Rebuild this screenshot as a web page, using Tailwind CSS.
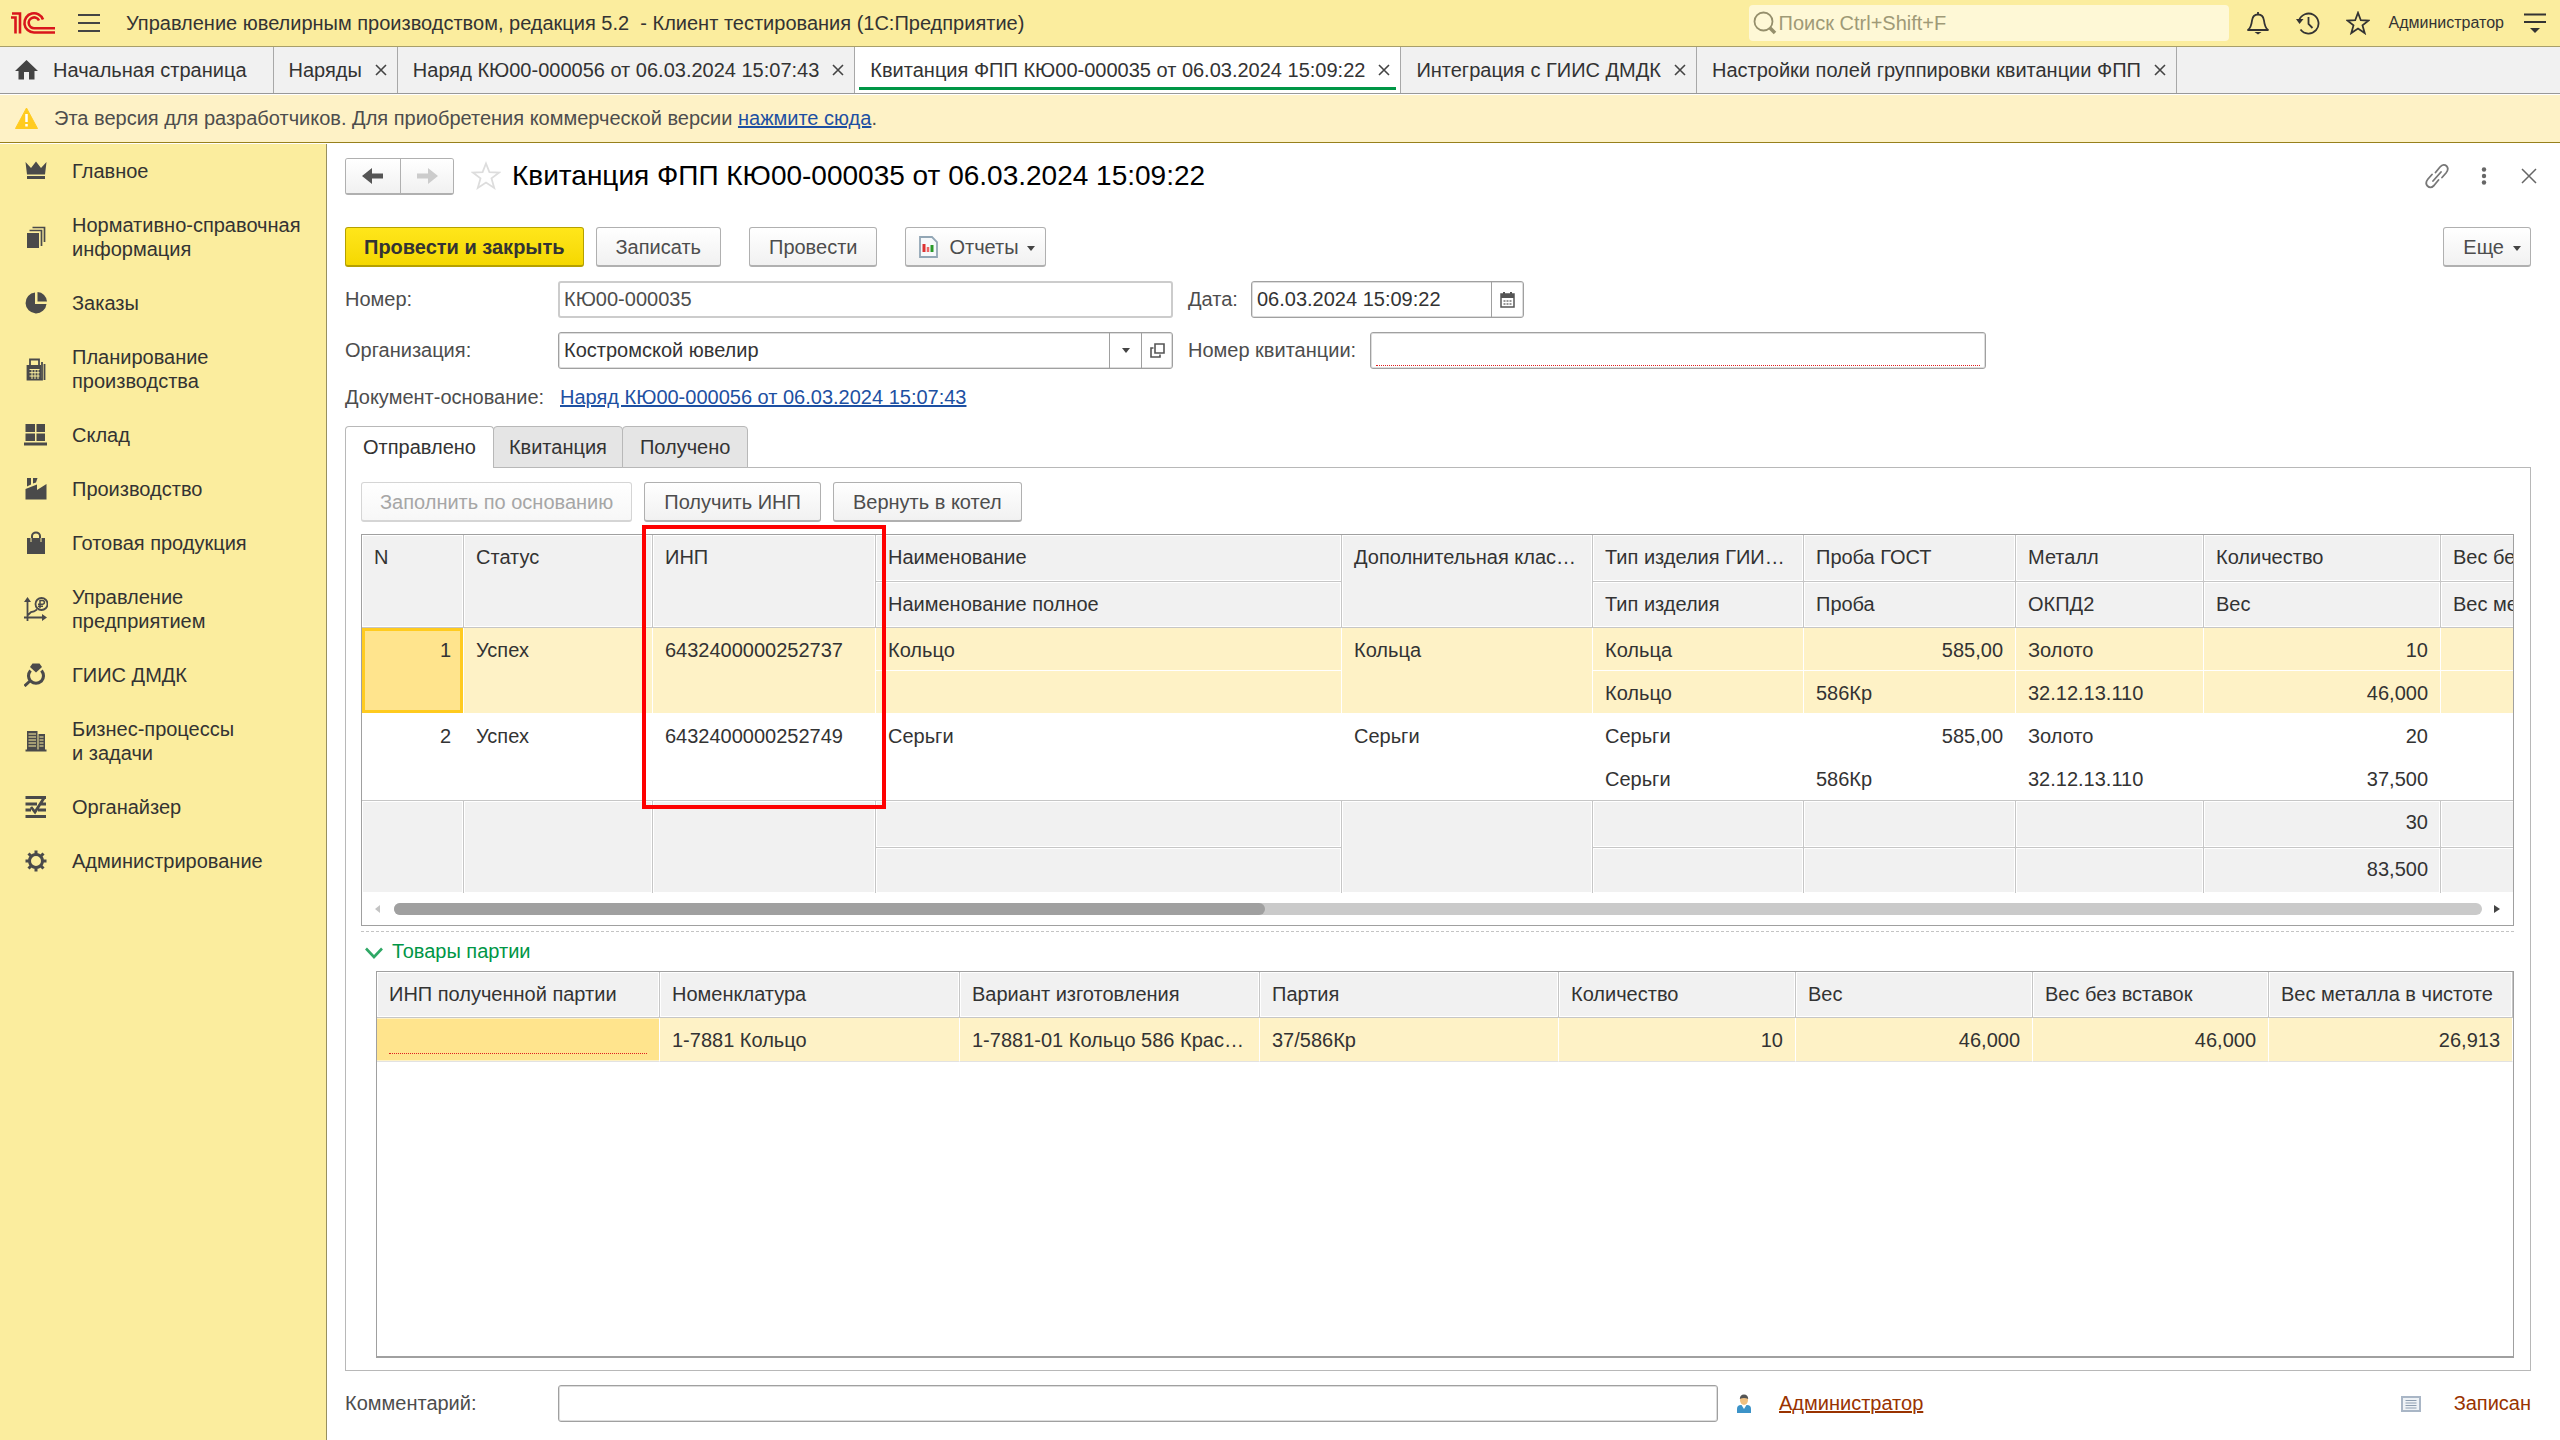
<!DOCTYPE html>
<html lang="ru">
<head>
<meta charset="utf-8">
<title>Квитанция ФПП КЮ00-000035 от 06.03.2024 15:09:22</title>
<script src="https://cdn.jsdelivr.net/npm/@tailwindcss/browser@4"></script>
</head>
<body class="flex min-h-screen flex-col bg-white font-['Liberation_Sans',Arial,sans-serif] text-[20px] leading-6 text-[#333]">

<!-- Application header -->
<header class="flex h-[47px] shrink-0 items-center border-b border-[#a89f6a] bg-[#fbed9e] pl-[11px] pr-[13px]">
  <svg class="h-[24px] w-[45px] shrink-0" viewBox="0 0 45 24" fill="none" stroke="#d9161c" stroke-width="2.6" aria-label="1С" role="img">
    <path d="M0 6.5H4.5V22.500M1 2.500H9V22.500"/>
    <path d="M32 8.500A9.600 9.600 0 1 0 23 21.500H44"/>
    <path d="M28 9.500A5.400 5.400 0 1 0 23.500 17.200H44"/>
  </svg>
  <button class="ml-[22px] shrink-0" aria-label="Меню"><svg class="h-[18px] w-[23px]" viewBox="0 0 23 18" stroke="#444" stroke-width="2"><path d="M0 1H22M0 9H22M0 17H22"/></svg></button>
  <h1 class="ml-[25px] whitespace-pre pb-px">Управление ювелирным производством, редакция 5.2  - Клиент тестирования (1С:Предприятие)</h1>
  <label class="ml-auto flex h-9 w-[480px] items-center rounded-sm bg-[#fef8d6] pl-1">
    <svg class="h-6 w-[25px] shrink-0" viewBox="0 0 25 24" fill="none" stroke="#958f6c" stroke-width="1.8"><circle cx="10.500" cy="10.500" r="9"/><path d="M17 17l5 5" stroke-width="3.500"/></svg>
    <input type="search" aria-label="Поиск" placeholder="Поиск Ctrl+Shift+F" class="w-full bg-transparent pl-px outline-none placeholder:text-[#9f9a77]">
  </label>
  <div class="ml-[17px] flex items-center gap-[26px]">
    <button aria-label="Уведомления"><svg class="h-6 w-6" viewBox="0 0 24 24" fill="none" stroke="#333" stroke-width="1.800" stroke-linejoin="round"><path d="M2 19C5 16.500 5.500 14 6 9.500C6.500 5.500 8.500 3.500 12 3.500S17.500 5.500 18 9.500C18.500 14 19 16.500 22 19Z"/><path d="M12 1v2"/><path d="M8.500 21h7l-3.500 2.500Z" fill="#333" stroke="none"/></svg></button>
    <button aria-label="История"><svg class="h-6 w-6" viewBox="0 0 24 24" fill="none" stroke="#333" stroke-width="1.800"><path d="M3 9.500A10 10 0 1 1 4.500 18.500"/><path d="M0 8h7.500l-4 5Z" fill="#333" stroke="none"/><path d="M12.500 6v7l4 4"/></svg></button>
    <button aria-label="Избранное"><svg class="h-6 w-6" viewBox="0 0 24 24" fill="none" stroke="#333" stroke-width="1.800"><path d="M12 1.800l2.800 7.400 7.900.3-6.200 4.900 2.200 7.700-6.700-4.500-6.700 4.500 2.200-7.700L1.300 9.500l7.900-.3Z"/></svg></button>
  </div>
  <span class="ml-[19px] text-base">Администратор</span>
  <button class="ml-[20px]" aria-label="Сервис"><svg class="h-5 w-[23px]" viewBox="0 0 23 20"><path d="M0 1.500H22M0 9H22" stroke="#333" stroke-width="2"/><path d="M6 15h10l-5 5Z" fill="#333"/></svg></button>
</header>

<!-- Open windows -->
<nav class="flex h-[47px] shrink-0 border-b border-[#999] bg-[#f1f1f1] [&_svg.x]:size-3">
  <a href="#" class="flex items-center border-r border-[#a8a8a8] pl-[15px] pr-[26px]">
    <svg class="mr-[15px] h-5 w-[23px]" viewBox="0 0 23 20" fill="#444"><path d="M11.500 0L23 11H19.500V19.500H14V12H9V19.500H3.500V11H0Z"/></svg>Начальная страница</a>
  <div class="flex items-center gap-[13px] border-r border-[#a8a8a8] pl-[15px] pr-[10px]"><a href="#">Наряды</a><button aria-label="Закрыть"><svg class="x" viewBox="0 0 12 12" stroke="#444" stroke-width="1.600"><path d="M1 1l10 10M11 1L1 11"/></svg></button></div>
  <div class="flex items-center gap-[13px] border-r border-[#a8a8a8] pl-[15px] pr-[10px]"><a href="#">Наряд КЮ00-000056 от 06.03.2024 15:07:43</a><button aria-label="Закрыть"><svg class="x" viewBox="0 0 12 12" stroke="#444" stroke-width="1.600"><path d="M1 1l10 10M11 1L1 11"/></svg></button></div>
  <div class="relative flex items-center gap-[13px] border-r border-[#a8a8a8] bg-white pl-[15px] pr-[10px]"><a href="#" aria-current="page">Квитанция ФПП КЮ00-000035 от 06.03.2024 15:09:22</a><button aria-label="Закрыть"><svg class="x" viewBox="0 0 12 12" stroke="#444" stroke-width="1.600"><path d="M1 1l10 10M11 1L1 11"/></svg></button><span class="absolute inset-x-1 bottom-[3px] h-[3px] bg-[#009646]"></span></div>
  <div class="flex items-center gap-[13px] border-r border-[#a8a8a8] pl-[15px] pr-[10px]"><a href="#">Интеграция с ГИИС ДМДК</a><button aria-label="Закрыть"><svg class="x" viewBox="0 0 12 12" stroke="#444" stroke-width="1.600"><path d="M1 1l10 10M11 1L1 11"/></svg></button></div>
  <div class="flex items-center gap-[13px] border-r border-[#a8a8a8] pl-[15px] pr-[10px]"><a href="#">Настройки полей группировки квитанции ФПП</a><button aria-label="Закрыть"><svg class="x" viewBox="0 0 12 12" stroke="#444" stroke-width="1.600"><path d="M1 1l10 10M11 1L1 11"/></svg></button></div>
</nav>

<!-- Licence notice -->
<div class="mt-px flex h-12 shrink-0 items-center border-b border-[#97801c] bg-[#fef2c6] pb-px pl-[15px] text-[#4d4d4d]">
  <svg class="mr-4 h-[22px] w-[23px]" viewBox="0 0 23 22"><path d="M11.500 1L22.500 21.500H.5Z" fill="#ffcb1f" stroke="#ffcb1f" stroke-linejoin="round"/><path d="M11.500 7v8M11.500 17v2.500" stroke="#fff" stroke-width="2.500"/></svg>
  <p>Эта версия для разработчиков. Для приобретения коммерческой версии <a href="#" class="text-[#1d50a2] underline">нажмите сюда</a>.</p>
</div>

<div class="flex flex-1 pt-px">
  <!-- Sections panel -->
  <aside class="w-[327px] shrink-0 border-r border-[#98905f] bg-[#fbed9e]">
    <ul class="[&_a]:flex [&_a]:items-center [&_a]:gap-[24px] [&_a]:py-[15px] [&_a]:pl-6 [&_svg]:size-6 [&_svg]:shrink-0">
      <li><a href="#"><svg viewBox="0 0 24 24" fill="#4a4a4a"><path d="M1.500 3l5.500 6L12 2.500 17 9l5.500-6-1.500 12.500H3ZM3 17h18v3H3Z"/></svg>Главное</a></li>
      <li><a href="#"><svg viewBox="0 0 24 24" fill="#4a4a4a"><path d="M3 8h12v15H3Z"/><path d="M5.500 5.500H17.500V21M8.500 2.500H20.500V17" fill="none" stroke="#4a4a4a" stroke-width="1.700"/></svg>Нормативно-справочная<br>информация</a></li>
      <li><a href="#"><svg viewBox="0 0 24 24" fill="#4a4a4a"><path d="M11 1.500A10.500 10.500 0 1 0 22.500 13H11Z"/><path d="M13.500 1A10 10 0 0 1 23 10.500H13.500Z"/></svg>Заказы</a></li>
      <li><a href="#"><svg viewBox="0 0 24 24"><path d="M4 8H17V22H4Z" fill="#4a4a4a"/><path d="M6 8V2.500H15V8M20.500 7V23M3.500 8V22.500H18V5" fill="none" stroke="#4a4a4a" stroke-width="1.800"/><path d="M5.500 12.500h10M5.500 15.700h10M5.500 19h10M8 12v10M11 12v10M14 12v10" stroke="#fbed9e" stroke-width="1"/></svg>Планирование<br>производства</a></li>
      <li><a href="#"><svg viewBox="0 0 24 24" fill="#4a4a4a"><path d="M1.500 1H11v8H1.500ZM12.500 1H21v8H12.500ZM1.500 10.500H11V18H1.500ZM12.500 10.500H21V18H12.500ZM0 19.500H23V22.500H0Z"/></svg>Склад</a></li>
      <li><a href="#"><svg viewBox="0 0 24 24" fill="#4a4a4a"><path d="M3 1H7V7.500L3 9.500ZM9 1H13.500L12 5.500 9 6.500ZM1.500 12L13 7.500V13L22.500 7V22.500H1.500Z"/></svg>Производство</a></li>
      <li><a href="#"><svg viewBox="0 0 24 24"><path d="M3 7H21V23H3Z" fill="#4a4a4a"/><path d="M8 11V5a4 3.500 0 0 1 8 0V11" fill="none" stroke="#4a4a4a" stroke-width="2"/><path d="M7 7v4M17 7v4" stroke="#fbed9e" stroke-width="1"/></svg>Готовая продукция</a></li>
      <li><a href="#"><svg viewBox="0 0 24 24" fill="none" stroke="#4a4a4a" stroke-width="1.800"><path d="M3.500 24V2M0 20.500H21M4 18l3-3 3-.5 3-2"/><path d="M3.500 0L7 5H0ZM23 20.500l-5-3.500v7Z" fill="#4a4a4a" stroke="none"/><circle cx="17.500" cy="7" r="6"/><path d="M16 11V3.500h2.500a1.800 1.800 0 0 1 0 3.800H14M14 9.200h5" stroke-width="1.500"/></svg>Управление<br>предприятием</a></li>
      <li><a href="#"><svg viewBox="0 0 24 24"><path d="M8.500 0.500H15.500L18 4 12 9.500 6 4Z" fill="#4a4a4a"/><path d="M6.500 7.500Q2.500 13 6.500 18Q12 22.500 17.500 18Q21.500 13 17.500 7.500M6.500 17.500L.5 23" fill="none" stroke="#4a4a4a" stroke-width="3"/></svg>ГИИС ДМДК</a></li>
      <li><a href="#"><svg viewBox="0 0 24 24"><path d="M3 2H13.500V22H3ZM14.500 5H21V22H14.500ZM1.500 20.500H22.500V22.500H1.500Z" fill="#4a4a4a"/><path d="M4.500 5h7.500M4.500 8h7.500M4.500 11h7.500M4.500 14h7.500M4.500 17h7.500M15.500 8h4M15.500 11h4M15.500 14h4M15.500 17h4" stroke="#fbed9e" stroke-width="1.200"/></svg>Бизнес-процессы<br>и задачи</a></li>
      <li><a href="#"><svg viewBox="0 0 24 24" fill="none" stroke="#4a4a4a" stroke-width="2.800"><path d="M1.500 2.500H22M1.500 9H13M17 9h5M1.500 15H7M14 15h8M1.500 21.500H22M7 12l4 5L20 3"/></svg>Органайзер</a></li>
      <li><a href="#"><svg viewBox="0 0 24 24" fill="none" stroke="#4a4a4a"><circle cx="12" cy="12" r="6.500" stroke-width="3"/><path d="M12 1.500v4M12 18.500v4M1.500 12h4M18.500 12h4M4.500 4.500l3 3M16.500 16.500l3 3M4.500 19.500l3-3M16.500 7.500l3-3" stroke-width="3"/></svg>Администрирование</a></li>
    </ul>
  </aside>

  <main class="flex min-w-0 flex-1 flex-col pl-[18px] pr-[29px]">
    <!-- Form title -->
    <div class="mt-[14px] flex h-9 items-center">
      <div class="flex h-[37px] overflow-hidden rounded-[3px] border border-b-2 border-[#b0b0b0]">
        <button aria-label="Назад" class="flex w-[55px] items-center justify-center border-r border-[#b0b0b0] bg-linear-to-b from-white to-[#f1f1f1]"><svg class="h-4 w-[22px]" viewBox="0 0 22 16" fill="#555"><path d="M0 8L10 0V5.500H21V10.500H10V16Z"/></svg></button>
        <button aria-label="Вперед" disabled class="flex w-[52px] items-center justify-center bg-linear-to-b from-white to-[#f1f1f1]"><svg class="h-4 w-[22px]" viewBox="0 0 22 16" fill="#ccc"><path d="M22 8L12 0V5.500H1V10.500H12V16Z"/></svg></button>
      </div>
      <button class="ml-[17px]" aria-label="В избранное"><svg class="size-[30px]" viewBox="0 0 30 30" fill="none" stroke="#ddd" stroke-width="1.800"><path d="M15 2.500l3.400 8.700 9.600.4-7.500 5.800 2.700 9.600-8.200-5.500-8.200 5.500 2.700-9.600L2 11.600l9.600-.4Z"/></svg></button>
      <h2 class="ml-[11px] text-[28px] leading-9 text-black">Квитанция ФПП КЮ00-000035 от 06.03.2024 15:09:22</h2>
      <div class="ml-auto -mr-[6px] flex items-center">
        <button aria-label="Ссылка"><svg class="h-[26px] w-6" viewBox="0 0 24 26" fill="none" stroke="#777" stroke-width="1.800" stroke-linecap="round"><path d="M8 18L16 9M10.500 9.500L15 4C17.500 1 20 1.500 21.500 3C23.500 5 23 7.500 21 10L17 14.500M13.500 17L9 22.500C6.500 25 4 24.500 2.500 23C.5 21 1 18.500 3 16L7 11.500"/></svg></button>
        <button class="ml-8" aria-label="Еще действия"><svg class="h-[18px] w-[6px]" viewBox="0 0 6 18" fill="#666"><circle cx="3" cy="2.500" r="2.200"/><circle cx="3" cy="9" r="2.200"/><circle cx="3" cy="15.500" r="2.200"/></svg></button>
        <button class="ml-[34px]" aria-label="Закрыть форму"><svg class="size-4" viewBox="0 0 16 16" stroke="#666" stroke-width="1.500"><path d="M1 1l14 14M15 1L1 15"/></svg></button>
      </div>
    </div>

    <!-- Command bar -->
    <div class="mt-[33px] flex h-10 items-stretch">
      <button class="rounded-[3px] border border-b-2 border-[#b5a000] bg-linear-to-b from-[#ffe61a] to-[#f5d800] px-[18px] font-bold">Провести и закрыть</button>
      <button class="ml-3 rounded-[3px] border border-b-2 border-[#b0b0b0] bg-linear-to-b from-white to-[#f1f1f1] px-[19px] text-[#4d4d4d]">Записать</button>
      <button class="ml-7 rounded-[3px] border border-b-2 border-[#b0b0b0] bg-linear-to-b from-white to-[#f1f1f1] px-[19px] text-[#4d4d4d]">Провести</button>
      <button class="ml-7 flex items-center rounded-[3px] border border-b-2 border-[#b0b0b0] bg-linear-to-b from-white to-[#f1f1f1] pl-[13px] pr-[10px] text-[#4d4d4d]"><svg class="mr-[11px] h-[22px] w-[19px]" viewBox="0 0 19 22"><path d="M1 1H13L18 6V21H1Z" fill="#f6f9fb" stroke="#92a6b5" stroke-width="1.800"/><path d="M5 8v8" stroke="#d33" stroke-width="3"/><path d="M9 11v5" stroke="#e66" stroke-width="2.500"/><path d="M13 9v7" stroke="#2a9a2a" stroke-width="3"/></svg>Отчеты<svg class="ml-2 mt-1 h-[5px] w-2" viewBox="0 0 8 5" fill="#444"><path d="M0 0H8L4 5Z"/></svg></button>
      <button class="ml-auto flex items-center rounded-[3px] border border-b-2 border-[#b0b0b0] bg-linear-to-b from-white to-[#f1f1f1] pl-[19px] pr-[9px] text-[#4d4d4d]">Еще<svg class="ml-[9px] mt-1 h-[5px] w-2" viewBox="0 0 8 5" fill="#444"><path d="M0 0H8L4 5Z"/></svg></button>
    </div>

    <!-- Document fields -->
    <div class="mt-[14px] flex h-[37px] items-center text-[#4d4d4d] [&_label]:pb-[2px]">
      <label for="num" class="w-[213px] shrink-0">Номер:</label>
      <input id="num" value="КЮ00-000035" readonly class="h-full w-[615px] rounded-[3px] border-2 border-[#ccc] px-1 outline-none">
      <label for="date" class="ml-[15px] w-[63px] shrink-0">Дата:</label>
      <div class="flex h-full w-[273px] rounded-[3px] border border-[#a0a0a0] shadow-[inset_0_0_0_1px_#ddd]">
        <input id="date" value="06.03.2024 15:09:22" class="min-w-0 flex-1 px-[5px] pb-px text-[#333] outline-none">
        <button aria-label="Выбрать дату" class="flex w-8 items-center justify-center border-l border-[#a0a0a0]"><svg class="h-4 w-[15px]" viewBox="0 0 15 16"><path d="M1 2H14V15H1Z" fill="#fff" stroke="#555" stroke-width="1.500"/><path d="M1 2H14V6H1Z" fill="#555"/><path d="M4 0v3M11 0v3" stroke="#555" stroke-width="2"/><path d="M3.500 9h8M3.500 12h8" stroke="#777" stroke-width="1.500" stroke-dasharray="2 1"/></svg></button>
      </div>
    </div>
    <div class="mt-[14px] flex h-[37px] items-center text-[#4d4d4d] [&_label]:pb-[2px]">
      <label for="org" class="w-[213px] shrink-0">Организация:</label>
      <div class="flex h-full w-[615px] rounded-[3px] border border-[#a0a0a0] shadow-[inset_0_0_0_1px_#ddd]">
        <input id="org" value="Костромской ювелир" class="min-w-0 flex-1 px-[5px] pb-px text-[#333] outline-none">
        <button aria-label="Выбрать" class="flex w-8 items-center justify-center border-l border-[#a0a0a0]"><svg class="h-[5px] w-2" viewBox="0 0 8 5" fill="#444"><path d="M0 0H8L4 5Z"/></svg></button>
        <button aria-label="Открыть" class="flex w-[31px] items-center justify-center border-l border-[#a0a0a0]"><svg class="size-[15px]" viewBox="0 0 15 15" fill="none" stroke="#555" stroke-width="1.600"><path d="M5 1H14V10H5ZM3.500 5H1V14H10V11.500"/></svg></button>
      </div>
      <label for="receipt" class="ml-[15px] w-[182px] shrink-0">Номер квитанции:</label>
      <div class="h-full w-[616px] rounded-[3px] border border-[#a0a0a0] px-[5px] pb-[2px] shadow-[inset_0_0_0_1px_#ddd]">
        <input id="receipt" class="h-full w-full border-b border-dotted border-[#e02020] outline-none">
      </div>
    </div>
    <div class="mt-4 flex h-6 items-center text-[#4d4d4d]">
      <span class="w-[215px] shrink-0">Документ-основание:</span>
      <a href="#" class="text-[#1d50a2] underline">Наряд КЮ00-000056 от 06.03.2024 15:07:43</a>
    </div>

    <!-- Form pages -->
    <div role="tablist" class="relative z-10 mt-[17px] -mb-px flex h-[42px] items-stretch">
      <button role="tab" aria-selected="true" class="rounded-t-[4px] border border-b-0 border-[#b8b8b8] bg-white px-[17px] pb-px">Отправлено</button>
      <button role="tab" aria-selected="false" class="-ml-px rounded-t-[4px] border border-[#b8b8b8] bg-[#e5e5e5] px-[15px]">Квитанция</button>
      <button role="tab" aria-selected="false" class="-ml-px rounded-t-[4px] border border-[#b8b8b8] bg-[#e5e5e5] px-[17px]">Получено</button>
    </div>
    <section class="flex flex-1 flex-col border border-[#b8b8b8] pb-3 pl-[15px] pr-4 pt-[14px]">
      <div class="flex h-10 items-stretch gap-3 text-[#4d4d4d]">
        <button disabled class="rounded-[3px] border border-b-2 border-[#d5d5d5] bg-linear-to-b from-white to-[#f7f7f7] px-[18px] text-[#a6a6a6]">Заполнить по основанию</button>
        <button class="rounded-[3px] border border-b-2 border-[#b0b0b0] bg-linear-to-b from-white to-[#f1f1f1] px-[19px]">Получить ИНП</button>
        <button class="rounded-[3px] border border-b-2 border-[#b0b0b0] bg-linear-to-b from-white to-[#f1f1f1] px-[19px]">Вернуть в котел</button>
      </div>

      <div class="relative mt-3 border border-[#a0a0a0]">
        <div class="overflow-hidden">
          <table class="w-[2289px] table-fixed border-separate border-spacing-0 text-left [&_td]:truncate [&_td]:px-3 [&_td]:align-top [&_th]:truncate [&_th]:px-3 [&_th]:pt-[10px] [&_th]:align-top [&_th]:font-normal [&_thead_th]:border-r [&_thead_th]:border-b [&_thead_th]:border-[#c6c6c6] [&_thead_th]:bg-[#f1f1f1] [&_thead_th]:shadow-[inset_0_0_0_1px_#fff] [&_tbody_td]:border-r [&_tbody_td]:border-b [&_tbody_td]:border-white [&_tbody_td]:pt-[10px] [&_tfoot_td]:border-t [&_tfoot_td]:border-r [&_tfoot_td]:border-[#c6c6c6] [&_tfoot_td]:bg-[#f1f1f1] [&_tfoot_td]:pt-[9px] [&_tfoot_td]:shadow-[inset_0_0_0_1px_#fff]">
            <colgroup><col class="w-[102px]"><col class="w-[189px]"><col class="w-[223px]"><col class="w-[466px]"><col class="w-[251px]"><col class="w-[211px]"><col class="w-[212px]"><col class="w-[188px]"><col class="w-[237px]"><col class="w-[210px]"></colgroup>
            <thead>
              <tr class="h-[47px]"><th rowspan="2">N</th><th rowspan="2">Статус</th><th rowspan="2">ИНП</th><th>Наименование</th><th rowspan="2">Дополнительная клас…</th><th>Тип изделия ГИИ…</th><th>Проба ГОСТ</th><th>Металл</th><th>Количество</th><th>Вес без вставок</th></tr>
              <tr class="h-[46px]"><th>Наименование полное</th><th>Тип изделия</th><th>Проба</th><th>ОКПД2</th><th>Вес</th><th>Вес металла</th></tr>
            </thead>
            <tbody>
              <tr class="h-[43px] bg-[#fef2c6]"><td rowspan="2" class="bg-[#ffe48d] text-right shadow-[inset_0_0_0_3px_#ffcb1f]">1</td><td rowspan="2">Успех</td><td rowspan="2">6432400000252737</td><td>Кольцо</td><td rowspan="2">Кольца</td><td>Кольца</td><td class="text-right">585,00</td><td>Золото</td><td class="text-right">10</td><td></td></tr>
              <tr class="h-[43px] bg-[#fef2c6]"><td></td><td>Кольцо</td><td>586Кр</td><td>32.12.13.110</td><td class="text-right">46,000</td><td></td></tr>
              <tr class="h-[43px]"><td rowspan="2" class="text-right">2</td><td rowspan="2">Успех</td><td rowspan="2">6432400000252749</td><td>Серьги</td><td rowspan="2">Серьги</td><td>Серьги</td><td class="text-right">585,00</td><td>Золото</td><td class="text-right">20</td><td></td></tr>
              <tr class="h-[43px]"><td></td><td>Серьги</td><td>586Кр</td><td>32.12.13.110</td><td class="text-right">37,500</td><td></td></tr>
            </tbody>
            <tfoot>
              <tr class="h-[47px]"><td rowspan="2"></td><td rowspan="2"></td><td rowspan="2"></td><td></td><td rowspan="2"></td><td></td><td></td><td></td><td class="text-right">30</td><td></td></tr>
              <tr class="h-[46px]"><td></td><td></td><td></td><td></td><td class="text-right">83,500</td><td></td></tr>
            </tfoot>
          </table>
        </div>
        <div class="flex h-8 items-center px-[13px]">
          <svg class="h-2 w-[5px]" viewBox="0 0 5 8" fill="#c4c4c4"><path d="M5 0V8L0 4Z"/></svg>
          <div class="ml-[14px] mr-3 h-3 flex-1 rounded-full bg-[#cacaca]"><div class="h-3 w-[871px] rounded-full bg-[#a0a0a0]"></div></div>
          <svg class="h-2 w-[6px]" viewBox="0 0 6 8" fill="#444"><path d="M0 0V8L6 4Z"/></svg>
        </div>
        <div class="absolute -top-[10px] left-[280px] h-[284px] w-[244px] border-4 border-[#fe0000]"></div>
      </div>

      <div class="mt-[5px] border-t border-dashed border-[#c4c4c4]"></div>
      <h3 class="mt-[7px] flex items-center text-[#009646]"><svg class="ml-1 mr-[9px] mt-1 h-3 w-[18px]" viewBox="0 0 18 12" fill="none" stroke="#2fa866" stroke-width="2.600"><path d="M1 1.500l8 8.500 8-8.500"/></svg>Товары партии</h3>

      <div class="ml-[15px] mt-2 flex-1 overflow-hidden border border-b-2 border-[#a0a0a0]">
        <table class="w-full table-fixed border-separate border-spacing-0 text-left [&_td]:truncate [&_td]:border-r [&_td]:border-b [&_td]:border-r-white [&_td]:border-b-[#e2e2e2] [&_td]:bg-[#fef2c6] [&_td]:px-3 [&_th]:truncate [&_th]:border-r [&_th]:border-b [&_th]:border-[#c6c6c6] [&_th]:bg-[#f1f1f1] [&_th]:px-3 [&_th]:pb-[2px] [&_th]:font-normal [&_th]:shadow-[inset_0_0_0_1px_#fff]">
          <colgroup><col class="w-[283px]"><col class="w-[300px]"><col class="w-[300px]"><col class="w-[299px]"><col class="w-[237px]"><col class="w-[237px]"><col class="w-[236px]"><col></colgroup>
          <thead>
            <tr class="h-[46px]"><th>ИНП полученной партии</th><th>Номенклатура</th><th>Вариант изготовления</th><th>Партия</th><th>Количество</th><th>Вес</th><th>Вес без вставок</th><th>Вес металла в чистоте</th></tr>
          </thead>
          <tbody>
            <tr class="h-[44px]"><td class="p-0"><div class="-mx-3 my-px flex h-[41px] items-end bg-[#ffe48d] px-3 pb-[6px]"><div class="w-full border-b border-dotted border-[#e02020]"></div></div></td><td>1-7881 Кольцо</td><td>1-7881-01 Кольцо 586 Крас…</td><td>37/586Кр</td><td class="text-right">10</td><td class="text-right">46,000</td><td class="text-right">46,000</td><td class="text-right">26,913</td></tr>
          </tbody>
        </table>
      </div>
    </section>

    <!-- Comment and state -->
    <footer class="mb-[18px] mt-[14px] flex h-[37px] items-center">
      <label for="comment" class="w-[213px] shrink-0 pb-[2px] text-[#4d4d4d]">Комментарий:</label>
      <input id="comment" class="h-full w-[1160px] rounded-[3px] border border-[#a0a0a0] px-[5px] shadow-[inset_0_0_0_1px_#ddd] outline-none">
      <svg class="ml-[18px] mr-[27px] h-5 w-4 shrink-0" viewBox="0 0 16 20"><path d="M1 19V15q0-4 4-4h6q4 0 4 4v4Z" fill="#3c93c8"/><path d="M5.500 11L8 15l2.500-4Z" fill="#fff"/><ellipse cx="8" cy="6" rx="4" ry="5" fill="#f0c080"/><path d="M3.800 5Q4 .5 8 .5T12.200 5Q8 3 3.800 5Z" fill="#555"/></svg>
      <a href="#" class="pb-[2px] text-[#993300] underline">Администратор</a>
      <svg class="ml-auto mr-[33px] h-4 w-5 shrink-0" viewBox="0 0 20 16"><path d="M1 1H19V15H1Z" fill="#eef2f6" stroke="#a9b6c6" stroke-width="2"/><path d="M4.500 4.500h11M4.500 7h11M4.500 9.500h11M4.500 12h11" stroke="#8d9db0" stroke-width="1.200"/></svg>
      <span class="pb-[2px] text-[#993300]">Записан</span>
    </footer>
  </main>
</div>
</body>
</html>
